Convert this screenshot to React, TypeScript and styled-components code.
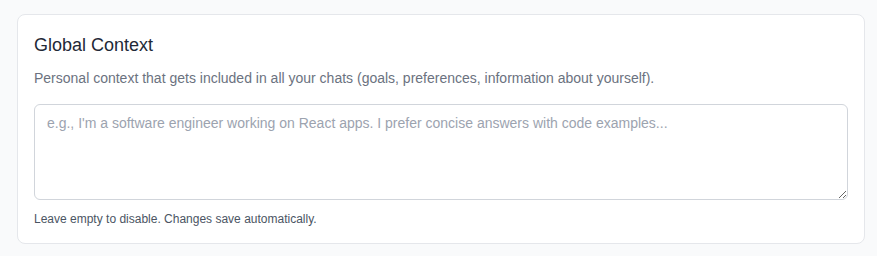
import React from 'react'
import styled, { createGlobalStyle } from 'styled-components'

const GlobalStyle = createGlobalStyle`
  * {
    box-sizing: border-box;
  }

  html, body {
    margin: 0;
    padding: 0;
    background: #f9fafb;
    font-family: "Liberation Sans", Arial, Helvetica, sans-serif;
  }
`

const Page = styled.div`
  padding: 14px 12px 11px 17px;
  min-height: 256px;
`

const Card = styled.section`
  background: #ffffff;
  border: 1px solid #e5e7eb;
  border-radius: 8px;
  padding: 16px;
`

const Title = styled.h2`
  margin: 0 0 9px;
  font-size: 18px;
  line-height: 28px;
  font-weight: 400;
  color: #1f2937;
`

const Description = styled.p`
  margin: 0 0 16px;
  font-size: 14px;
  line-height: 20px;
  color: #6b7280;
`

const ContextInput = styled.textarea`
  display: block;
  width: 100%;
  height: 96px;
  margin: 0;
  padding: 8px 12px;
  border: 1px solid #d1d5db;
  border-radius: 6px;
  font-family: inherit;
  font-size: 14px;
  line-height: 20px;
  color: #111827;
  background: #ffffff;
  outline: none;

  &::placeholder {
    color: #9ca3af;
  }
`

const Hint = styled.p`
  margin: 11px 0 0;
  font-size: 12px;
  line-height: 16px;
  color: #4b5563;
`

export default function App() {
  return (
    <>
      <GlobalStyle />
      <Page>
        <Card>
          <Title>Global Context</Title>
          <Description>
            Personal context that gets included in all your chats (goals, preferences, information about yourself).
          </Description>
          <ContextInput placeholder="e.g., I'm a software engineer working on React apps. I prefer concise answers with code examples..." />
          <Hint>Leave empty to disable. Changes save automatically.</Hint>
        </Card>
      </Page>
    </>
  )
}
